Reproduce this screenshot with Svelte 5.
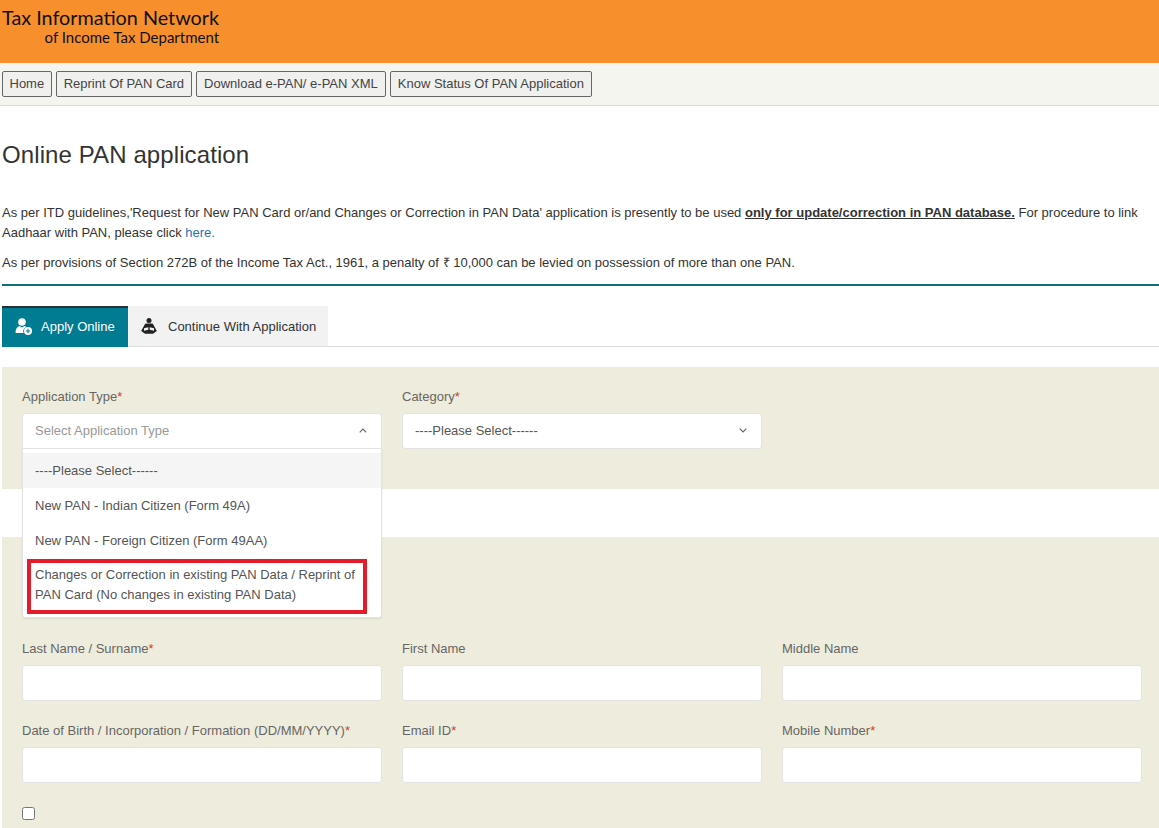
<script>
  const nav = ["Home", "Reprint Of PAN Card", "Download e-PAN/ e-PAN XML", "Know Status Of PAN Application"];
  const options = ["----Please Select------", "New PAN - Indian Citizen (Form 49A)", "New PAN - Foreign Citizen (Form 49AA)"];
  const fields = [
    { label: "Last Name / Surname", req: true },
    { label: "First Name", req: false },
    { label: "Middle Name", req: false },
    { label: "Date of Birth / Incorporation / Formation (DD/MM/YYYY)", req: true },
    { label: "Email ID", req: true },
    { label: "Mobile Number", req: true }
  ];
</script>

<div class="page">
  <header class="brand">
    <div class="logo">
      <div class="logo-main">Tax Information Network</div>
      <div class="logo-sub">of Income Tax Department</div>
    </div>
  </header>

  <nav class="menu">
    {#each nav as item}
      <button class="menu-btn">{item}</button>
    {/each}
  </nav>

  <main class="content">
    <h1>Online PAN application</h1>
    <p class="first">As per ITD guidelines,'Request for New PAN Card or/and Changes or Correction in PAN Data' application is presently to be used <strong>only for update/correction in PAN database.</strong> For procedure to link Aadhaar with PAN, please click <a href="#here">here.</a></p>
    <p class="second">As per provisions of Section 272B of the Income Tax Act., 1961, a penalty of ₹ 10,000 can be levied on possession of more than one PAN.</p>
    <hr />

    <div class="tabs">
      <div class="tab active">
        <svg width="18" height="17" viewBox="0 0 18 17" fill="#fff">
          <circle cx="7" cy="4" r="3.8" />
          <path d="M0.500 14c0-3.400 2-5.500 4-6l2.500 1.500L9.500 8c.6.200 1.200.500 1.700.900-1.800.800-3 2.400-3 4.300 0 .7.100 1.300.4 1.800H1.500c-.7 0-1-.400-1-1z" />
          <circle cx="13" cy="13" r="4" />
          <path d="M13 10.800v4.400M10.800 13h4.400" stroke="#007c92" stroke-width="1.100" />
        </svg>
        <span>Apply Online</span>
      </div>
      <div class="tab second-tab">
        <svg width="16" height="16" viewBox="0 0 16 16" fill="#222">
          <circle cx="8" cy="2.600" r="2.500" />
          <path d="M5.200 5.600h5.600c.8 0 1.300.400 1.600 1.100L15.800 13 12 15.800H4L.2 13l3.400-6.300c.3-.7.800-1.100 1.600-1.100z" />
          <path d="M3 10.200l4.300-1v2.600L3 12.800zM13 10.200l-4.300-1v2.600l4.300 1z" fill="#f2f2f2" />
        </svg>
        <span>Continue With Application</span>
      </div>
    </div>

    <section class="panel top">
      <div class="grid">
        <div class="field select-field">
          <span class="label">Application Type<i>*</i></span>
          <div class="select open">
            <span class="placeholder">Select Application Type</span>
            <svg class="chev" width="8" height="5" viewBox="0 0 8 5"><path d="M.7 4.300L4 1l3.300 3.300" /></svg>
          </div>
          <div class="dropdown">
            {#each options as opt, i}
              <div class="opt" class:hover={i === 0}>{opt}</div>
            {/each}
            <div class="opt last">Changes or Correction in existing PAN Data / Reprint of PAN Card (No changes in existing PAN Data)</div>
            <div class="callout"></div>
          </div>
        </div>
        <div class="field">
          <span class="label">Category<i>*</i></span>
          <div class="select">
            <span>----Please Select------</span>
            <svg class="chev" width="8" height="5" viewBox="0 0 8 5"><path d="M.7.700L4 4l3.300-3.300" /></svg>
          </div>
        </div>
      </div>
    </section>

    <section class="panel bottom">
      <div class="grid">
        {#each fields as f}
          <div class="field">
            <span class="label">{f.label}{#if f.req}<i>*</i>{/if}</span>
            <input type="text" />
          </div>
        {/each}
      </div>
      <input class="check" type="checkbox" />
    </section>
  </main>
</div>

<style>
  :global(body) {
    margin: 0;
    background: #fff;
  }

  .page {
    height: 828px;
    overflow: hidden;
    font-family: "Liberation Sans", Arial, sans-serif;
    font-size: 13px;
    color: #333;
  }

  .brand {
    height: 63px;
    background: #f78f2d;
    padding: 5px 0 0 2px;
    box-sizing: border-box;
  }

  .logo {
    display: inline-block;
    text-align: right;
    font-family: Lato, sans-serif;
    color: #111;
  }

  .logo-main {
    font-size: 19.800px;
    line-height: 24px;
  }

  .logo-sub {
    font-size: 15px;
    line-height: 17px;
  }

  .menu {
    height: 43px;
    box-sizing: border-box;
    background: #f5f5ef;
    border-bottom: 1px solid #ddd;
    padding: 8px 2px 0;
    display: flex;
    gap: 4px;
    align-items: flex-start;
  }

  .menu-btn {
    height: 26px;
    padding: 0 7px 2px;
    font: inherit;
    color: #444;
    background: #f0f0ee;
    border: 1px solid #666;
    border-radius: 2px;
  }

  .menu-btn:first-child {
    padding: 0 6.500px 2px;
  }

  .content {
    padding-left: 2px;
  }

  h1 {
    margin: 33px 0 0;
    font-size: 24px;
    line-height: 32px;
    font-weight: 400;
    letter-spacing: 0.1px;
    color: #333;
  }

  p {
    margin: 0;
    line-height: 20px;
  }

  p.first {
    margin-top: 32px;
  }

  p.second {
    margin-top: 10px;
  }

  p strong {
    text-decoration: underline;
  }

  p a {
    color: #1b75bb;
    text-decoration: none;
  }

  hr {
    margin: 11px 0 0;
    border: 0;
    height: 2px;
    background: #0f6f80;
  }

  .tabs {
    margin: 20px 0 0;
    display: flex;
    border-bottom: 1px solid #ddd;
    height: 40px;
  }

  .tab {
    display: flex;
    align-items: center;
    height: 40px;
    padding: 0 13px;
    background: #f2f2f2;
    color: #333;
    box-sizing: border-box;
    white-space: nowrap;
  }

  .tab svg {
    flex: none;
  }

  .tab.active {
    width: 126px;
    gap: 8px;
    background: #007c92;
    color: #fff;
    border-top: 2px solid #263238;
    height: 41px;
    padding-bottom: 3px;
  }

  .second-tab {
    width: 200px;
    gap: 11px;
  }

  .panel {
    background: #eeecdc;
    padding: 19px 17px 40px 20px;
  }

  .panel.top {
    margin-top: 20px;
  }

  .panel.bottom {
    margin-top: 48px;
    padding-top: 101px;
    padding-bottom: 60px;
  }

  .grid {
    display: grid;
    grid-template-columns: repeat(3, 360px);
    column-gap: 20px;
    row-gap: 19px;
  }

  .field {
    position: relative;
  }

  .label {
    display: block;
    height: 21px;
    line-height: 21px;
    margin-bottom: 6px;
    color: #666;
  }

  .label i {
    color: #e0342c;
    font-style: normal;
  }

  .select {
    height: 36px;
    box-sizing: border-box;
    background: #fff;
    border: 1px solid #e3e3e3;
    border-radius: 3px;
    padding: 0 12px 2px;
    display: flex;
    align-items: center;
    justify-content: space-between;
    color: #555;
  }

  .select.open {
    border-radius: 3px 3px 0 0;
  }

  .placeholder {
    color: #999;
  }

  .chev {
    fill: none;
    stroke: #666;
    stroke-width: 1.100;
    margin-right: 2px;
  }

  .dropdown {
    position: absolute;
    z-index: 2;
    left: 0;
    right: 0;
    top: 63px;
    height: 169px;
    box-sizing: border-box;
    background: #fff;
    border: 1px solid #e3e3e3;
    border-top: 0;
    border-radius: 0 0 3px 3px;
    padding-top: 4px;
    box-shadow: 0 1px 2px rgba(0, 0, 0, 0.08);
    color: #555;
  }

  .opt {
    height: 35px;
    line-height: 36px;
    padding: 0 12px;
  }

  .opt.hover {
    background: #f5f5f5;
  }

  .opt.last {
    height: auto;
    line-height: 20px;
    padding: 7px 12px;
  }

  .callout {
    position: absolute;
    left: 4px;
    top: 110px;
    width: 340px;
    height: 55px;
    box-sizing: border-box;
    border: 4px solid #e31b2b;
  }

  input[type="text"] {
    display: block;
    width: 100%;
    height: 36px;
    box-sizing: border-box;
    background: #fff;
    border: 1px solid #e3e3e3;
    border-radius: 3px;
    padding: 0 12px;
  }

  .check {
    display: block;
    margin: 24px 0 0;
    width: 13px;
    height: 13px;
  }
</style>
